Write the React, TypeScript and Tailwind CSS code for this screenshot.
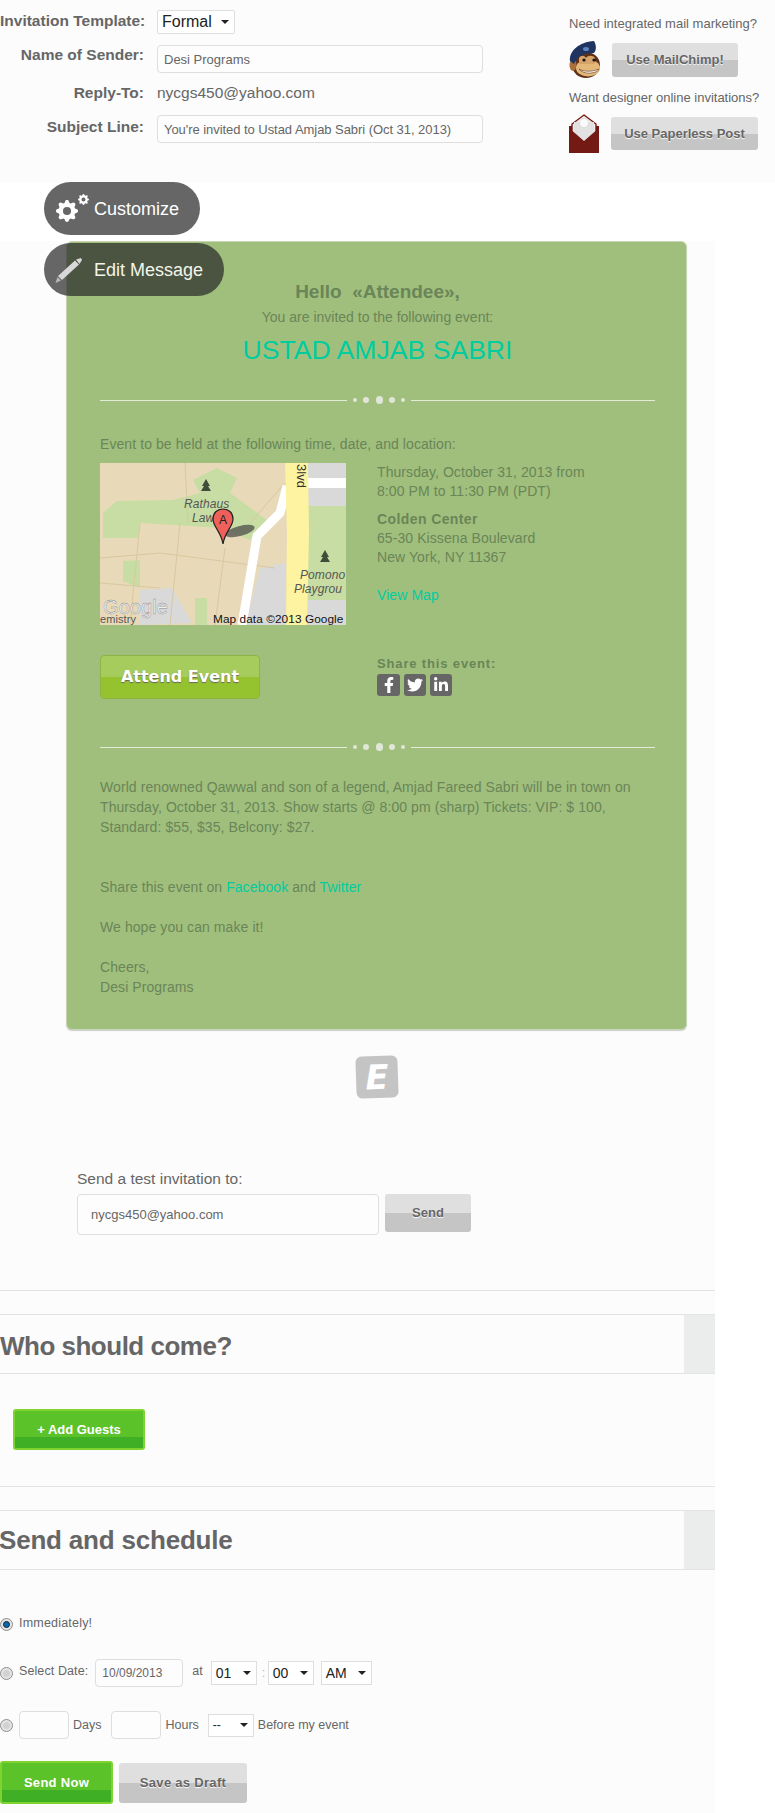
import { FaFacebookF, FaTwitter, FaLinkedinIn } from 'react-icons/fa';
import { BsGearFill } from 'react-icons/bs';

const grayButton = 'flex items-center justify-center rounded-[3px] bg-[linear-gradient(#dfdfdf_50%,#c5c5c5_50%)] font-bold text-[#666] [text-shadow:0_1px_1px_#fff]';
const greenButton = 'flex items-center justify-center rounded-[3px] border-2 border-[#7ed32f] bg-[linear-gradient(#5bc22a_70%,#3fb025_70%)] font-bold text-white';
const field = 'rounded-[4px] border border-[#dedede] bg-[#fdfdfd] text-[#666] outline-none';
const label = 'w-[144px] whitespace-nowrap text-right text-[15.5px] font-bold leading-[20px]';

function Select({ value, className }: { value: string; className: string }) {
  return (
    <div className={`flex items-center justify-between border border-[#dedede] bg-white pl-[4px] pr-[5px] text-[#222] ${className}`}>
      <span>{value}</span>
      <span className="border-x-[4px] border-t-[4px] border-x-transparent border-t-[#222]" />
    </div>
  );
}

function Radio({ checked }: { checked?: boolean }) {
  return (
    <span className="flex h-[13px] w-[13px] shrink-0 items-center justify-center rounded-full border border-[#8f8f8f] bg-[#e4e4e4]">
      <span className={checked ? 'h-[7px] w-[7px] rounded-full border border-[#123] bg-[#0a6ab0]' : 'h-[7px] w-[7px] rounded-full bg-[#d2d2d2]'} />
    </span>
  );
}

function Divider() {
  return (
    <div className="flex h-[10px] items-center">
      <div className="h-[1px] w-[247px] bg-[#e4ecd8]" />
      <div className="mx-[5px] flex w-[54px] items-center justify-between px-[1px]">
        <span className="h-[4px] w-[4px] rounded-full bg-[#e0e6d8]" />
        <span className="h-[6px] w-[6px] rounded-full bg-[#e0e6d8]" />
        <span className="h-[8px] w-[7px] rounded-full bg-[#e0e6d8]" />
        <span className="h-[6px] w-[6px] rounded-full bg-[#e0e6d8]" />
        <span className="h-[4px] w-[4px] rounded-full bg-[#e0e6d8]" />
      </div>
      <div className="h-[1px] flex-1 bg-[#e4ecd8]" />
    </div>
  );
}

function SectionHeader({ title, className }: { title: string; className?: string }) {
  return (
    <div className="mt-[23px] flex h-[60px] items-center justify-between border-y border-[#e3e3e3]">
      <h2 className={`text-[26px] font-bold text-[#666] ${className ?? ''}`}>{title}</h2>
      <div className="h-full w-[31px] bg-[#ebecec]" />
    </div>
  );
}

function ChimpLogo() {
  return (
    <svg width="32" height="37" viewBox="0 0 32 37">
      <ellipse cx="17" cy="24" rx="14" ry="13" fill="#5e3018" />
      <ellipse cx="4" cy="24" rx="3.5" ry="6" fill="#a9703c" />
      <path d="M1 20C0 10 10 1 25 0c3 5 2 10 0 12C16 12 8 15 5 23z" fill="#1f3560" />
      <ellipse cx="17" cy="8" rx="3" ry="2" fill="#5f84bd" />
      <ellipse cx="19" cy="27" rx="12" ry="8.5" fill="#e3b878" />
      <path d="M10 17c2-3 5-3 7 0 2-3 7-3 9 0v6H10z" fill="#d6a468" />
      <circle cx="15" cy="19" r="1.6" fill="#111" />
      <circle cx="25" cy="19" r="1.6" fill="#111" />
      <path d="M10 28c5 3 13 3 20 0-2 5-16 6-20 0z" fill="#fff" stroke="#5e3018" strokeWidth="0.6" />
    </svg>
  );
}

function EnvelopeLogo() {
  return (
    <svg width="30" height="39" viewBox="0 0 30 39">
      <path d="M15 1 27 10V22H3V10z" fill="#eee" stroke="#741a14" strokeWidth="1.4" />
      <path d="M3 12V20L0 17V12zM27 12V20L30 17V12z" fill="#741a14" />
      <path d="M5 8h20v13L15 27 5 21z" fill="#e2e2e2" />
      <circle cx="15" cy="9" r="4.5" fill="#fafafa" stroke="#ccc" strokeWidth="0.5" />
      <path d="M0 14l15 13 15-13v25H0z" fill="#741a14" />
    </svg>
  );
}

function PencilIcon() {
  return (
    <svg width="28" height="26" viewBox="0 0 28 26" className="shrink-0">
      <path d="M21 2.5 26 1 27 3 24.5 7z" fill="#d8d8d8" />
      <path d="M20 3.5 24 7.5 7 23 3 19z" fill="#d8d8d8" />
      <path d="M2.5 20 6 23.5 0.5 26z" fill="#b8b8b8" />
    </svg>
  );
}

function MapImage() {
  return (
    <svg width="246" height="162" viewBox="0 0 246 162" className="block shrink-0" fontFamily="'Liberation Sans', sans-serif">
      <rect width="246" height="162" fill="#e8dab8" />
      <path d="M93 17 117 5 137 15 130 30 100 30z" fill="#c8dda4" />
      <path d="M3 50 17 38 73 37 100 30 130 30 167 57 150 77 120 65 40 60 38 75 3 75z" fill="#c8dda4" />
      <path d="M23 98 40 97 40 125 23 118z" fill="#c8dda4" />
      <path d="M40 127 72 125 92 160 40 162z" fill="#d9d9d9" />
      <path d="M95 135 107 135 107 162 95 162z" fill="#c8dda4" />
      <path d="M160 105 186 100 186 162 145 162z" fill="#d9d9d9" />
      <rect x="208" y="0" width="38" height="43" fill="#d9d9d9" />
      <rect x="207" y="15" width="39" height="10" fill="#fff" />
      <rect x="208" y="43" width="38" height="95" fill="#c8dda4" />
      <rect x="207" y="137" width="39" height="25" fill="#d9d9d9" />
      <g stroke="#d8c8a0" strokeWidth="1" fill="none">
        <path d="M0 95 60 90 175 105M85 0 88 60M80 60 70 162M125 85 115 162M0 120 60 125M40 60 30 162M150 60 185 20" />
      </g>
      <path d="M187 23 180 50 157 73 142 162" stroke="#fff" strokeWidth="9" fill="none" />
      <path d="M185 0H208L209 70 207 162H186L187 70z" fill="#fdf3a0" />
      <path d="M106 16l-4 7h2l-3 5h10l-3-5h2zM225 87l-4 7h2l-3 5h10l-3-5h2z" fill="#3e4e3a" />
      <g fontStyle="italic" fontSize="12" fill="#555">
        <text x="84" y="45">Rathaus</text>
        <text x="92" y="59">Law</text>
        <text x="200" y="116">Pomono</text>
        <text x="194" y="130">Playgrou</text>
      </g>
      <text fontSize="13" fill="#333" transform="translate(197 1) rotate(90)">3lvd</text>
      <ellipse cx="140" cy="68" rx="15" ry="5" fill="#444" opacity="0.7" transform="rotate(-15 140 68)" />
      <path d="M123 46c-6 0-10 4-10 10 0 8 8 12 10 25 2-13 10-17 10-25 0-6-4-10-10-10z" fill="#f0605a" stroke="#222" strokeWidth="1.2" />
      <text x="123" y="61" fontSize="12" textAnchor="middle" fill="#222">A</text>
      <text x="3" y="151" fontSize="20" fill="#eee" stroke="#888" strokeWidth="0.4">Google</text>
      <text x="0" y="160" fontSize="11" fill="#555">emistry</text>
      <text x="113" y="160" fontSize="11.8" fill="#111">Map data ©2013 Google</text>
    </svg>
  );
}

export default function App() {
  return (
    <div className="relative h-[1813px] w-[775px] overflow-hidden bg-white font-['Liberation_Sans',Arial,sans-serif] text-[#666]">
      <div className="flex h-[183px] bg-[#fcfcfc] pt-[10px]">
        <div className="w-[569px]">
          <div className="flex items-start">
            <label className={`${label} pt-[1px]`}>Invitation Template:</label>
            <Select value="Formal" className="ml-[13px] h-[24px] w-[78px] rounded-[2px] text-[16px]" />
          </div>
          <div className="mt-[11px] flex items-start">
            <label className={label}>Name of Sender:</label>
            <input readOnly value="Desi Programs" className={`${field} ml-[13px] h-[28px] w-[326px] px-[6px] text-[13px]`} />
          </div>
          <div className="mt-[10px] flex items-center">
            <label className={label}>Reply-To:</label>
            <span className="ml-[13px] text-[15.5px] leading-[20px]">nycgs450@yahoo.com</span>
          </div>
          <div className="mt-[12px] flex items-start">
            <label className={`${label} pt-[2px]`}>Subject Line:</label>
            <input readOnly value="You're invited to Ustad Amjab Sabri (Oct 31, 2013)" className={`${field} ml-[13px] h-[28px] w-[326px] px-[6px] text-[13px] tracking-[-0.05px]`} />
          </div>
        </div>
        <div className="text-[13px] leading-[16px]">
          <p className="mt-[6px]">Need integrated mail marketing?</p>
          <div className="mt-[9px] flex items-center">
            <ChimpLogo />
            <a className={`${grayButton} ml-[11px] h-[34px] w-[126px] text-[13px]`}>Use MailChimp!</a>
          </div>
          <p className="mt-[12px]">Want designer online invitations?</p>
          <div className="mt-[8px] flex items-center">
            <EnvelopeLogo />
            <a className={`${grayButton} ml-[12px] h-[33px] w-[147px] text-[13px]`}>Use Paperless Post</a>
          </div>
        </div>
      </div>

      <div className="h-[1630px] w-[715px] bg-[#fcfcfc]">
        <div className="ml-[66px] mt-[58px] h-[789px] w-[621px] rounded-[6px] border border-[#c8d6b6] bg-[#a0bf7c] pl-[33px] pr-[31px] pt-[38px] text-[14px] leading-[20px] tracking-[0.08px] text-[#6a8558] [box-shadow:0_1px_1px_#ccc]">
          <div className="text-center">
            <h1 className="text-[19px] font-bold leading-[24px] tracking-normal">Hello&nbsp; «Attendee»,</h1>
            <p className="mt-[3px] tracking-normal">You are invited to the following event:</p>
            <p className="mt-[8px] text-[26.6px] leading-[30px] tracking-normal text-[#00cca0]">USTAD AMJAB SABRI</p>
          </div>
          <div className="mt-[30px]"><Divider /></div>
          <p className="mt-[29px]">Event to be held at the following time, date, and location:</p>
          <div className="mt-[9px] flex">
            <MapImage />
            <div className="ml-[31px] leading-[19px]">
              <p>Thursday, October 31, 2013 from</p>
              <p>8:00 PM to 11:30 PM (PDT)</p>
              <p className="mt-[9px] font-bold tracking-[0.4px]">Colden Center</p>
              <p>65-30 Kissena Boulevard</p>
              <p>New York, NY 11367</p>
              <a className="mt-[19px] block text-[#00cca0]">View Map</a>
            </div>
          </div>
          <div className="mt-[30px] flex">
            <a className="flex h-[44px] w-[160px] items-center justify-center rounded-[4px] border border-[#8db545] bg-[linear-gradient(#a5cc5c_50%,#95c22f_50%)] font-['DejaVu_Sans',sans-serif] text-[16px] font-bold tracking-normal text-white [text-shadow:0_1px_1px_#666]">Attend Event</a>
            <div className="ml-[117px]">
              <p className="text-[13px] font-bold leading-[18px] tracking-[0.85px]">Share this event:</p>
              <div className="mt-[1px] flex gap-[4px]">
                <span className="flex h-[22px] w-[23px] items-center justify-center rounded-[3px] bg-[#666] text-[16px] text-white"><FaFacebookF /></span>
                <span className="flex h-[22px] w-[22px] items-center justify-center rounded-[3px] bg-[#666] text-[16px] text-white"><FaTwitter /></span>
                <span className="flex h-[22px] w-[22px] items-center justify-center rounded-[3px] bg-[#666] text-[16px] text-white"><FaLinkedinIn /></span>
              </div>
            </div>
          </div>
          <div className="mt-[43px]"><Divider /></div>
          <p className="mt-[25px]">World renowned Qawwal and son of a legend, Amjad Fareed Sabri will be in town on Thursday, October 31, 2013. Show starts @ 8:00 pm (sharp) Tickets: VIP: $ 100, Standard: $55, $35, Belcony: $27.</p>
          <p className="mt-[40px]">Share this event on <a className="text-[#00cca0]">Facebook</a> and <a className="text-[#00cca0]">Twitter</a></p>
          <p className="mt-[20px]">We hope you can make it!</p>
          <p className="mt-[20px]">Cheers,<br />Desi Programs</p>
        </div>

        <div className="ml-[356px] mt-[26px] flex h-[42px] w-[42px] -rotate-2 items-center justify-center rounded-[6px] bg-[#c4c4c4] font-['DejaVu_Sans',sans-serif] text-[34px] font-bold italic leading-none text-white">E</div>

        <div className="ml-[77px] mt-[71px]">
          <p className="text-[15.5px] leading-[20px]">Send a test invitation to:</p>
          <div className="mt-[5px] flex items-start">
            <input readOnly value="nycgs450@yahoo.com" className={`${field} h-[41px] w-[302px] px-[13px] text-[13px]`} />
            <a className={`${grayButton} ml-[6px] h-[38px] w-[86px] text-[13px]`}>Send</a>
          </div>
        </div>

        <hr className="mt-[55px] border-[#e3e3e3]" />
        <SectionHeader title="Who should come?" className="translate-y-[2px] tracking-[-0.5px]" />
        <a className={`${greenButton} ml-[13px] mt-[35px] h-[41px] w-[132px] text-[13px]`}>+ Add Guests</a>

        <hr className="mt-[36px] border-[#e3e3e3]" />
        <SectionHeader title="Send and schedule" className="-ml-[1px] tracking-[-0.2px]" />

        <div className="text-[12.5px] leading-[16px]">
          <div className="mt-[46px] flex items-center">
            <Radio checked />
            <span className="ml-[6px] -translate-y-[1px] tracking-[0.2px]">Immediately!</span>
          </div>
          <div className="mt-[27px] flex h-[28px] items-center">
            <Radio />
            <span className="ml-[6px] -translate-y-[2px] tracking-[0.1px]">Select Date:</span>
            <input readOnly value="10/09/2013" className={`${field} ml-[7px] h-[28px] w-[88px] px-[6px] text-[12px]`} />
            <span className="ml-[9px] -translate-y-[2px]">at</span>
            <Select value="01" className="ml-[8px] h-[24px] w-[46px] text-[14px]" />
            <span className="ml-[5px] w-[6px] text-[#bbb]">:</span>
            <Select value="00" className="h-[24px] w-[46px] text-[14px]" />
            <Select value="AM" className="ml-[7px] h-[24px] w-[51px] text-[14px]" />
          </div>
          <div className="mt-[24px] flex h-[28px] items-center">
            <Radio />
            <input readOnly className={`${field} ml-[6px] h-[28px] w-[50px]`} />
            <span className="ml-[4px]">Days</span>
            <input readOnly className={`${field} ml-[10px] h-[28px] w-[50px]`} />
            <span className="ml-[4px]">Hours</span>
            <Select value="--" className="ml-[9px] h-[23px] w-[46px] text-[12px]" />
            <span className="ml-[4px]">Before my event</span>
          </div>
          <div className="mt-[22px] flex items-center">
            <a className={`${greenButton} h-[43px] w-[113px] text-[13px] tracking-[0.3px]`}>Send Now</a>
            <a className={`${grayButton} ml-[6px] h-[40px] w-[128px] text-[13px] tracking-[0.3px]`}>Save as Draft</a>
          </div>
        </div>
      </div>

      <div className="absolute left-[44px] top-[182px] flex h-[53px] w-[156px] items-center rounded-full bg-[#666] pt-[1px] text-[18px] text-white">
        <span className="relative ml-[12px] h-[30px] w-[38px] shrink-0">
          <BsGearFill className="absolute bottom-[2px] left-0 text-[22px]" />
          <BsGearFill className="absolute right-[5px] top-0 text-[11px]" />
        </span>
        Customize
      </div>
      <div className="absolute left-[44px] top-[243px] flex h-[53px] w-[180px] items-center gap-[11px] rounded-full bg-[rgba(38,38,38,0.7)] pl-[11px] pt-[1px] text-[18px] text-[#f4f4ea]">
        <PencilIcon />
        Edit Message
      </div>
    </div>
  );
}
